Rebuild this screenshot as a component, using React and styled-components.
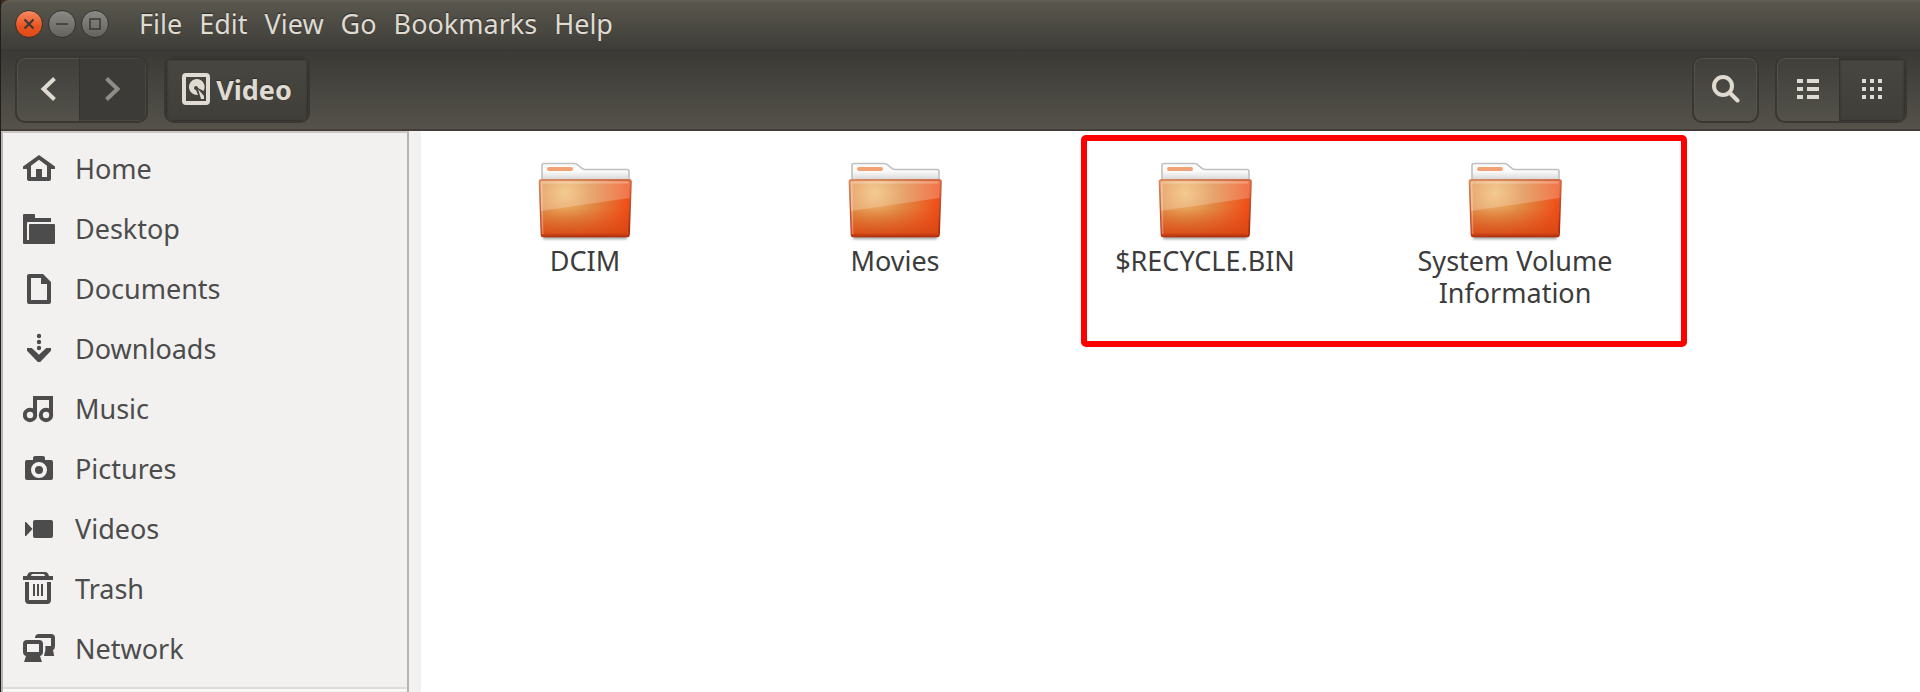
import React from "react";
import styled, { createGlobalStyle, css } from "styled-components";

const Global = createGlobalStyle`
  *, *::before, *::after { box-sizing: border-box; }
  body { margin: 0; background: #fff; }
  body, button, a { font-family: "Noto Sans", "Open Sans", sans-serif; font-size: 27px; }
`;

const Window = styled.div`
  min-height: 100vh;
  display: flex;
  flex-direction: column;
  border-left: 1px solid #211d20;
  background: #ffffff;
`;

const Corner = styled.div`
  background: #3a2b20;
`;

const MenuBar = styled.header`
  height: 49px;
  display: flex;
  align-items: center;
  gap: 30px;
  padding: 0 12px 4px 14px;
  border-top-left-radius: 8px;
  border-top: 2px solid #605d52;
  background: linear-gradient(#59574d, #3e3d38);
`;

const WindowControls = styled.div`
  display: flex;
  gap: 5px;
`;

const ControlButton = styled.button`
  width: 28px;
  height: 28px;
  padding: 0;
  display: grid;
  place-items: center;
  border: 1px solid #35332f;
  border-radius: 50%;
  color: #3a3833;
  background: ${(p) =>
    p.$close ? "linear-gradient(#f58a63, #e95420 60%, #df4a16)" : "linear-gradient(#8b8983, #65635d)"};
`;

const Menus = styled.nav`
  display: flex;
  gap: 17px;
`;

const MenuButton = styled.button`
  padding: 0;
  border: 0;
  background: none;
  color: #dfdbd2;
  line-height: 36px;
  text-shadow: 0 -1px 1px #2d2c28;
`;

const Toolbar = styled.div`
  display: flex;
  align-items: center;
  height: 82px;
  padding: 6px 13px 6px 14px;
  gap: 16px;
  border-bottom: 2px solid #423d38;
  background: linear-gradient(#3a3935, #54524a);
`;

const Spacer = styled.div`
  flex: 1;
`;

const Group = styled.div`
  display: flex;
  height: 67px;
  border: 2px solid #383732;
  border-radius: 10px;
  overflow: hidden;
  background: linear-gradient(#403f3a, #53514a);
  box-shadow: inset 0 0 0 1px #53524b;
`;

const ToolButton = styled.button`
  width: ${(p) => p.$width}px;
  padding: 0;
  display: flex;
  align-items: center;
  justify-content: center;
  gap: 6px;
  border: 1px solid transparent;
  background: none;
  color: #dfdbd2;
  ${(p) =>
    p.$pressed &&
    css`
      border-color: #34332f;
      background: linear-gradient(#474640, #403f3a);
      box-shadow: inset 0 1px 2px #2f2e2a;
    `}
  &:disabled {
    color: #8f8d86;
    background: #3c3b37;
    border-color: #474640;
    border-left-color: #33322e;
  }
`;

const PlaceName = styled.span`
  font-weight: 700;
  text-shadow: 0 -1px 1px #2d2c28;
`;

const Main = styled.div`
  flex: 1;
  display: flex;
`;

const Sidebar = styled.aside`
  width: 408px;
  flex: none;
  padding-top: 5px;
  border: 2px solid #b8b5ae;
  border-top-color: #cbc7c2;
  border-bottom: 0;
  background: #f2f1f0;
`;

const Gutter = styled.div`
  width: 12px;
  flex: none;
  background: #f2f1f0;
`;

const Places = styled.ul`
  margin: 0;
  padding: 0;
  list-style: none;
`;

const PlaceLink = styled.a`
  height: 60px;
  display: flex;
  align-items: center;
  gap: 20px;
  padding-left: 20px;
  color: #4c4c4c;
  text-decoration: none;
`;

const Separator = styled.hr`
  height: 4px;
  margin: 9px 0 0;
  border: 0;
  border-top: 2px solid #dcdcdb;
  background: #fafafa;
`;

const Files = styled.main`
  position: relative;
  flex: 1;
  display: grid;
  grid-template-columns: repeat(auto-fill, 310px);
  align-content: start;
  padding: 26px 0 0 9px;
`;

const FileItem = styled.figure`
  margin: 0;
  display: flex;
  flex-direction: column;
  align-items: center;
  gap: 2px;
`;

const FileName = styled.figcaption`
  max-width: 220px;
  color: #3c3c3c;
  line-height: 32px;
  text-align: center;
`;

const Highlight = styled.div`
  position: absolute;
  left: 660px;
  top: 4px;
  width: 606px;
  height: 212px;
  border: 6px solid #ff0000;
  border-radius: 5px;
  pointer-events: none;
`;

const Glyph = ({ children, size = 32 }) => (
  <svg width={size} height={size} viewBox="0 0 16 16" fill="currentColor" aria-hidden="true">
    {children}
  </svg>
);

const stroke = { fill: "none", stroke: "currentColor" };

const placeIcons = {
  Home: (
    <>
      <path d="M8 1.5 0 7.2v1.3h2v5q0 1 1 1h10q1 0 1-1v-5h2V7.2ZM8 3.9l4 3v5.6H9V8.5H6.5v4H4V6.9Z" />
      <path d="M6.5 8.5h3v5h-3z" />
    </>
  ),
  Desktop: (
    <path d="M0 1.500q0-.5.5-.5h5q.5 0 .5.5V3h8v2H2.500q-.5 0-.5.5V14h1V6.500Q3 6 3.500 6h12q.5 0 .5.5v9q0 .5-.5.5H.5Q0 16 0 15.500z" />
  ),
  Documents: <path d="M3 1q-1 0-1 1v13q0 1 1 1h10q1 0 1-1V5l-4-4ZM4 3h5v3h3v8H4Z" fillRule="evenodd" />,
  Downloads: (
    <>
      <circle cx="8" cy="2" r="1.1" />
      <circle cx="8" cy="5" r="1.1" />
      <circle cx="8" cy="8" r="1.1" />
      <path d="M2 8h2.4L8 11.4 11.6 8H14v1.4L8.6 15H7.4L2 9.4Z" />
    </>
  ),
  Music: (
    <>
      <path d="M5 2h10v9h-2V4H7v7H5z" />
      <circle cx="3.5" cy="11.5" r="2.6" {...stroke} strokeWidth="2" />
      <circle cx="11.5" cy="11.5" r="2.6" {...stroke} strokeWidth="2" />
    </>
  ),
  Pictures: (
    <path
      fillRule="evenodd"
      d="M5 3q0-1 1-1h4q1 0 1 1v1h3q1 0 1 1v8q0 1-1 1H2q-1 0-1-1V5q0-1 1-1h3zM8 5a4 4 0 1 0 0 8 4 4 0 0 0 0-8m0 2a2 2 0 1 1 0 4 2 2 0 0 1 0-4"
    />
  ),
  Videos: (
    <>
      <rect x="5" y="4" width="10" height="9" rx="1" />
      <path d="M1 5v7h.5L4.8 8.5 1.5 5z" />
    </>
  ),
  Trash: (
    <>
      <path d="M0 2h2q.5-2 2-2h7q1.500 0 2 2h2v2H0zM4 2h7q0-1-1-1H5Q4 1 4 2" fillRule="evenodd" />
      <path d="M2 5v9q0 1 1 1h9q1 0 1-1V5" {...stroke} strokeWidth="2" />
      <path d="M5 6h1v6H5zm2 0h1v6H7zm2 0h1v6H9z" />
    </>
  ),
  Network: (
    <>
      <path d="M6 3q0-2 2-2h6q2 0 2 2v4q0 1.500-1 2l.6 3H10.500l.7-3V7H14V3z" />
      <path d="M2 4h6q2 0 2 2v4q0 1.500-1.500 2l1 3h-9l1-3Q0 11.500 0 10V6q0-2 2-2m0 2v4h6V6z" fillRule="evenodd" />
    </>
  ),
};

const FolderIcon = () => (
  <svg width="96" height="86" viewBox="0 0 96 86" aria-hidden="true">
    <defs>
      <radialGradient id="folder-face" gradientUnits="userSpaceOnUse" cx="28" cy="36" r="72">
        <stop offset="0" stopColor="#f0bc72" />
        <stop offset="0.4" stopColor="#e08b45" />
        <stop offset="0.88" stopColor="#ee5019" />
        <stop offset="1" stopColor="#e24a15" />
      </radialGradient>
      <linearGradient id="folder-shade" x1="0" y1="0" x2="0" y2="1">
        <stop offset="0.5" stopColor="#e0501a" stopOpacity="0" />
        <stop offset="1" stopColor="#d44612" stopOpacity="0.85" />
      </linearGradient>
      <linearGradient id="folder-edge" x1="0" y1="0" x2="0.3" y2="1">
        <stop offset="0" stopColor="#d98a62" />
        <stop offset="1" stopColor="#b22c0c" />
      </linearGradient>
      <linearGradient id="folder-paper" x1="0" y1="0" x2="0" y2="1">
        <stop offset="0.4" stopColor="#fbfbfb" />
        <stop offset="1" stopColor="#c8c8c8" />
      </linearGradient>
      <filter id="folder-shadow" x="-10%" y="-100%" width="120%" height="300%">
        <feGaussianBlur stdDeviation="1.5" />
      </filter>
    </defs>
    <rect x="6" y="77" width="84" height="5" fill="#000" opacity="0.4" filter="url(#folder-shadow)" />
    <path
      d="M5 26V8.500q0-2 2-2h30.500q2 0 4 2l2.500 2.200q2 1.800 4 1.800h42q2 0 2 2V26z"
      fill="url(#folder-paper)"
      stroke="#c0c0c0"
      strokeWidth="1.600"
    />
    <rect x="10" y="10" width="26" height="4" rx="2" fill="#f2a274" />
    <path
      d="M4.500 22.800h87.500q2 0 2 2l-2 53q-.2 1.500-1.700 1.500H6.200q-1.500 0-1.700-1.500L2.500 24.800q0-2 2-2z"
      fill="url(#folder-face)"
    />
    <path
      d="M4.500 22.800h87.500q2 0 2 2l-2 53q-.2 1.500-1.700 1.500H6.200q-1.500 0-1.700-1.500L2.500 24.800q0-2 2-2z"
      fill="url(#folder-shade)"
      stroke="url(#folder-edge)"
      strokeWidth="1.700"
    />
    <path d="M3.500 24h89.500l-.6 17L4 54z" fill="#fff" opacity="0.22" />
    <path d="M5.500 77 4.500 25.500h87" fill="none" stroke="#fff" strokeWidth="1.800" opacity="0.28" />
    <path d="M7 77.500h83" stroke="#b93710" strokeWidth="1.500" opacity="0.6" />
  </svg>
);

const menus = ["File", "Edit", "View", "Go", "Bookmarks", "Help"];
const files = ["DCIM", "Movies", "$RECYCLE.BIN", "System Volume Information"];

export default function App() {
  return (
    <Window>
      <Global />
      <Corner>
        <MenuBar>
          <WindowControls>
            <ControlButton $close aria-label="Close">
              <svg width="12" height="12" viewBox="0 0 12 12" {...stroke} strokeWidth="2">
                <path d="m1.500 1.500 9 9m0-9-9 9" />
              </svg>
            </ControlButton>
            <ControlButton aria-label="Minimize">
              <svg width="12" height="12" viewBox="0 0 12 12" {...stroke} strokeWidth="1.500">
                <path d="M0 6h12" />
              </svg>
            </ControlButton>
            <ControlButton aria-label="Maximize">
              <svg width="12" height="12" viewBox="0 0 12 12" {...stroke} strokeWidth="1.500">
                <path d="M1 1h10v10H1z" />
              </svg>
            </ControlButton>
          </WindowControls>
          <Menus>
            {menus.map((m) => (
              <MenuButton key={m}>{m}</MenuButton>
            ))}
          </Menus>
        </MenuBar>
      </Corner>
      <Toolbar>
        <Group>
          <ToolButton $width={62} aria-label="Back">
            <svg width="16" height="24" viewBox="0 0 16 24" {...stroke} strokeWidth="4">
              <path d="M14.500 1.500 3.500 12l11 10.500" />
            </svg>
          </ToolButton>
          <ToolButton $width={67} disabled aria-label="Forward">
            <svg width="16" height="24" viewBox="0 0 16 24" {...stroke} strokeWidth="4">
              <path d="m1.500 1.500 11 10.500-11 10.500" />
            </svg>
          </ToolButton>
        </Group>
        <Group>
          <ToolButton $width={142} $pressed>
            <svg width="28" height="32" viewBox="0 0 28 32" aria-hidden="true">
              <rect x="2" y="2" width="24" height="28" rx="2" {...stroke} strokeWidth="4" />
              <path d="M14 6a8 8 0 1 0 2 16l-2-5a2 2 0 1 1 2-2l5.500 3A8 8 0 0 0 14 6" fill="currentColor" />
              <path d="m16 16 6 7v3h-3z" fill="currentColor" />
            </svg>
            <PlaceName>Video</PlaceName>
          </ToolButton>
        </Group>
        <Spacer />
        <Group>
          <ToolButton $width={63} aria-label="Search">
            <svg width="28" height="28" viewBox="0 0 28 28" {...stroke} strokeWidth="4">
              <circle cx="11" cy="11" r="9" />
              <path d="m17.500 17.500 8 8" strokeLinecap="round" />
            </svg>
          </ToolButton>
        </Group>
        <Group>
          <ToolButton $width={62} aria-label="List view">
            <svg width="22" height="20" viewBox="0 0 22 20" fill="currentColor">
              <path d="M0 0h6v4H0zM10 0h12v4H10zM0 8h6v4H0zM10 8h12v4H10zM0 16h6v4H0zM10 16h12v4H10z" />
            </svg>
          </ToolButton>
          <ToolButton $width={66} $pressed aria-label="Icon view">
            <svg width="20" height="20" viewBox="0 0 20 20" fill="currentColor">
              <path d="M0 0h4v4H0zM8 0h4v4H8zM16 0h4v4h-4zM0 8h4v4H0zM8 8h4v4H8zM16 8h4v4h-4zM0 16h4v4H0zM8 16h4v4H8zM16 16h4v4h-4z" />
            </svg>
          </ToolButton>
        </Group>
      </Toolbar>
      <Main>
        <Sidebar>
          <Places>
            {Object.entries(placeIcons).map(([name, icon]) => (
              <li key={name}>
                <PlaceLink href="#">
                  <Glyph>{icon}</Glyph>
                  {name}
                </PlaceLink>
              </li>
            ))}
          </Places>
          <Separator />
        </Sidebar>
        <Gutter />
        <Files>
          {files.map((name) => (
            <FileItem key={name}>
              <FolderIcon />
              <FileName>{name}</FileName>
            </FileItem>
          ))}
          <Highlight />
        </Files>
      </Main>
    </Window>
  );
}
